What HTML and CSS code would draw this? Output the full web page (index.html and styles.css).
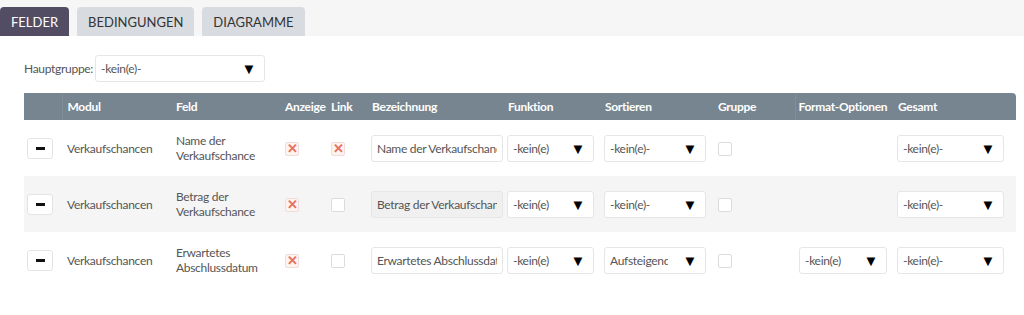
FILE: index.html
```html
<!DOCTYPE html>
<html lang="de">
<head>
    <meta charset="UTF-8">
    <title>Felder</title>
    <link rel="stylesheet" href="styles.css">
</head>
<body>
    <div class="tabs">
        <button class="tab active">FELDER</button>
        <button class="tab">BEDINGUNGEN</button>
        <button class="tab">DIAGRAMME</button>
    </div>

    <div class="group-row">
        <label>Hauptgruppe:</label>
        <div class="select group-select"><span>-kein(e)-</span><i>▼</i></div>
    </div>

    <table class="fields">
        <colgroup>
            <col style="width:38px">
            <col style="width:109px">
            <col style="width:109px">
            <col style="width:46px">
            <col style="width:41px">
            <col style="width:136px">
            <col style="width:97px">
            <col style="width:113px">
            <col style="width:82px">
            <col style="width:98px">
            <col>
        </colgroup>
        <thead>
            <tr>
                <th class="first"></th>
                <th>Modul</th>
                <th>Feld</th>
                <th>Anzeige</th>
                <th>Link</th>
                <th>Bezeichnung</th>
                <th>Funktion</th>
                <th>Sortieren</th>
                <th>Gruppe</th>
                <th class="divided">Format-Optionen</th>
                <th>Gesamt</th>
            </tr>
        </thead>
        <tbody>
            <tr>
                <td><span class="minus"></span></td>
                <td>Verkaufschancen</td>
                <td>Name der<br>Verkaufschance</td>
                <td><span class="check on">✕</span></td>
                <td><span class="check on">✕</span></td>
                <td><div class="text-input"><span>Name der Verkaufschance</span></div></td>
                <td><div class="select fn"><span>-kein(e)</span><i>▼</i></div></td>
                <td><div class="select sort"><span>-kein(e)-</span><i>▼</i></div></td>
                <td><span class="check"></span></td>
                <td></td>
                <td><div class="select total"><span>-kein(e)-</span><i>▼</i></div></td>
            </tr>
            <tr class="alt">
                <td><span class="minus"></span></td>
                <td>Verkaufschancen</td>
                <td>Betrag der<br>Verkaufschance</td>
                <td><span class="check on">✕</span></td>
                <td><span class="check"></span></td>
                <td><div class="text-input"><span>Betrag der Verkaufschance</span></div></td>
                <td><div class="select fn"><span>-kein(e)</span><i>▼</i></div></td>
                <td><div class="select sort"><span>-kein(e)-</span><i>▼</i></div></td>
                <td><span class="check"></span></td>
                <td></td>
                <td><div class="select total"><span>-kein(e)-</span><i>▼</i></div></td>
            </tr>
            <tr>
                <td><span class="minus"></span></td>
                <td>Verkaufschancen</td>
                <td>Erwartetes<br>Abschlussdatum</td>
                <td><span class="check on">✕</span></td>
                <td><span class="check"></span></td>
                <td><div class="text-input"><span>Erwartetes Abschlussdatum</span></div></td>
                <td><div class="select fn"><span>-kein(e)</span><i>▼</i></div></td>
                <td><div class="select sort"><span>Aufsteigend</span><i>▼</i></div></td>
                <td><span class="check"></span></td>
                <td><div class="select fmt"><span>-kein(e)</span><i>▼</i></div></td>
                <td><div class="select total"><span>-kein(e)-</span><i>▼</i></div></td>
            </tr>
        </tbody>
    </table>
</body>
</html>
```

FILE: styles.css
```css
body {
    margin: 0;
    font-family: Lato, "Open Sans", sans-serif;
    font-size: 12px;
    letter-spacing: -0.3px;
    color: #555;
    background-color: #ffffff;
}

.tabs {
    display: flex;
    align-items: flex-end;
    gap: 8px;
    height: 36px;
    background-color: #f6f6f6;
}

.tab {
    height: 29px;
    padding: 0 11px;
    border: none;
    border-radius: 4px 4px 0 0;
    background-color: #d8dce0;
    color: #333;
    font-family: inherit;
    font-size: 13px;
    letter-spacing: 0;
    cursor: pointer;
}

.tab.active {
    background-color: #534d64;
    color: white;
}

.group-row {
    display: flex;
    align-items: center;
    gap: 2px;
    margin: 19px 0 0 24px;
    height: 26px;
}

.group-row label {
    color: #555;
}

.select {
    display: flex;
    align-items: center;
    box-sizing: border-box;
    height: 27px;
    padding: 0 8px 0 5px;
    background-color: white;
    border: 1px solid #e6e6e6;
    border-radius: 3px;
    white-space: nowrap;
}

.select span {
    flex: 1;
    min-width: 0;
    overflow: hidden;
}

.select i {
    padding-left: 14px;
    font-style: normal;
    color: #000;
    font-size: 15px;
}

.group-select {
    width: 170px;
}

.fields {
    margin: 12px 0 0 24px;
    width: 992px;
    border-collapse: collapse;
    table-layout: fixed;
}

.fields th {
    height: 27px;
    padding: 0 0 0 5px;
    background-color: #778591;
    color: white;
    font-weight: bold;
    text-align: left;
    white-space: nowrap;
}

.fields th:last-child {
    border-top-right-radius: 4px;
}

.fields th.first {
    border-right: 1px solid #7f8d98;
}

.fields th.divided {
    border-left: 1px solid #808e99;
    padding-left: 3px;
}

.fields td {
    height: 56px;
    padding: 0 0 0 4px;
    line-height: 15px;
    white-space: nowrap;
}

.fields td:first-child {
    padding-left: 3px;
}

.fields td:nth-child(2),
.fields td:nth-child(3) {
    padding-left: 5px;
}

.fields tr.alt td {
    background-color: #f5f5f5;
}

.minus {
    display: flex;
    align-items: center;
    justify-content: center;
    box-sizing: border-box;
    width: 26px;
    height: 21px;
    background-color: white;
    border: 1px solid #e4e4e4;
    border-radius: 3px;
}

.minus::before {
    content: "";
    width: 9px;
    height: 3px;
    background-color: #111;
}

.check {
    display: inline-flex;
    align-items: center;
    justify-content: center;
    box-sizing: border-box;
    width: 14px;
    height: 14px;
    background-color: white;
    border: 1px solid #dcdcdc;
    border-radius: 2px;
    vertical-align: middle;
    margin-left: 1px;
    font-size: 13px;
    font-weight: bold;
    color: #e8715e;
    line-height: 1;
}

.check.on {
    border-color: #f3dcd8;
    background-color: #fdf3f1;
}

.text-input {
    display: flex;
    align-items: center;
    box-sizing: border-box;
    width: 132px;
    height: 27px;
    padding: 0 5px;
    background-color: white;
    border: 1px solid #e6e6e6;
    border-radius: 3px;
}

.text-input span {
    overflow: hidden;
}

.alt .text-input {
    background-color: #f0f0f0;
}

.fn {
    width: 87px;
}

.sort {
    width: 102px;
}

.fmt {
    width: 88px;
}

.total {
    width: 107px;
}
```
